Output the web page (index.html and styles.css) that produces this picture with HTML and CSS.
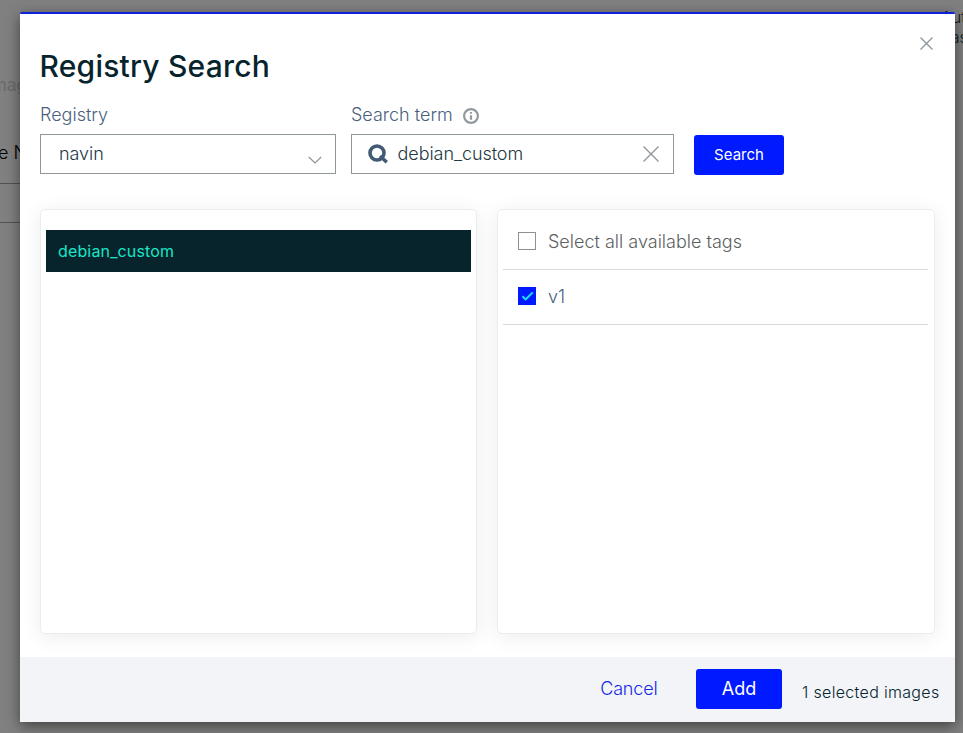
FILE: index.html
```html
<!DOCTYPE html>
<html lang="en">
<head>
<meta charset="utf-8">
<title>Registry Search</title>
<link rel="stylesheet" href="styles.css">
</head>
<body>
<div class="backdrop">
  <span class="behind behind-tab">Imag</span>
  <span class="behind behind-label">e N</span>
  <div class="behind behind-input"></div>
  <span class="behind behind-note">Aut<br>bas</span>
</div>
<section class="modal">
  <button class="close" aria-label="Close">
    <svg width="13" height="13" viewBox="0 0 13 13"><path d="M.5.5l12 12M12.5.5l-12 12"/></svg>
  </button>
  <div class="content">
    <h1>Registry Search</h1>
    <div class="form">
      <div class="field registry">
        <label>Registry</label>
        <div class="control"><span class="value">navin</span>
          <svg class="chevron" width="14" height="8" viewBox="0 0 14 8"><path d="M.8 1L7 7l6.200-6"/></svg>
        </div>
      </div>
      <div class="field term">
        <label>Search term
          <svg class="info" width="16" height="16" viewBox="0 0 16 16"><circle cx="8" cy="8" r="6.900"/><path d="M8 7.200v4.500M8 4v1.800"/></svg>
        </label>
        <div class="control">
          <svg class="glass" width="20" height="20" viewBox="0 0 20 20"><circle cx="9" cy="9" r="7"/><path d="M12 12l6.800 6.300"/></svg>
          <span class="value">debian_custom</span>
          <svg class="clear" width="16" height="16" viewBox="0 0 16 16"><path d="M.5.5l15 15M15.500.5l-15 15"/></svg>
        </div>
      </div>
      <button class="btn search">Search</button>
    </div>
    <div class="panels">
      <div class="panel images"><div class="image"><span>debian_custom</span></div></div>
      <div class="panel tags">
        <div class="tag all"><i class="box"></i><span>Select all available tags</span></div>
        <div class="tag"><i class="box checked"><svg width="18" height="18" viewBox="0 0 18 18"><path d="M4.500 9.200l3.200 3.200 7-7"/></svg></i><span>v1</span></div>
      </div>
    </div>
  </div>
  <footer>
    <button class="cancel">Cancel</button>
    <button class="btn add">Add</button>
    <span class="count">1 selected images</span>
  </footer>
</section>
</body>
</html>
```
FILE: styles.css
```css
* { box-sizing: border-box; }
body {
  margin: 0;
  height: 733px;
  padding: 12px 8px 11px 20px;
  overflow: hidden;
  background: #808080;
  font: 300 18px/22px Inter, "Liberation Sans", sans-serif;
  color: #07242d;
}
button { border: 0; padding: 0; background: none; font: inherit; }
svg { display: block; flex: none; fill: none; }

.backdrop { position: absolute; inset: 0; overflow: hidden; }
.behind { position: absolute; white-space: nowrap; }
.behind-tab { left: -13px; top: 74px; font-size: 17px; font-weight: 500; color: #6c6c6c; }
.behind-label { left: -2px; top: 142px; color: #000; }
.behind-input { left: -10px; top: 183px; width: 500px; height: 40px; border: 1px solid #505252; }
.behind-note { left: 941px; top: 7px; font-size: 16px; line-height: 20px; color: #08191f; }

.modal {
  position: relative;
  display: flex;
  flex-direction: column;
  height: 710px;
  border-top: 2px solid #1022d8;
  border-radius: 2px 2px 0 0;
  background: #fff;
  box-shadow: 0 4px 14px rgba(0, 0, 0, .5);
}
.close { position: absolute; top: 22.500px; right: 22px; }
.close svg, .clear { stroke: #8d9599; stroke-width: 1.3; }
.content { flex: 1; padding: 33px 20px 0; }
h1 { margin: 0 0 0 -.5px; font-size: 30px; line-height: 38px; font-weight: 500; letter-spacing: .22px; }

.form { display: flex; align-items: flex-end; margin-top: 19px; }
.field label { display: flex; height: 22px; margin-bottom: 8px; color: #4a5f7d; }
.registry { width: 296px; margin-right: 15px; }
.term { width: 323px; margin-right: 20px; }
.info { margin: 4px 0 0 10px; stroke: #929a9e; stroke-width: 2.2; }
.control {
  display: flex;
  align-items: center;
  height: 40px;
  border: 1px solid #8f979a;
  color: #23383f;
}
.registry .control { padding: 0 13px 0 18px; }
.term .control { padding: 0 14px 0 16px; }
.value { flex: 1; letter-spacing: -.06px; }
.chevron { margin-top: 11px; stroke: #8d9599; stroke-width: 1.2; }
.glass { margin-right: 9.5px; stroke: #425a74; stroke-width: 3.6; }
.btn { border-radius: 3px; background: #001aff; color: #fff; font-weight: 400; }
.search { width: 90px; height: 40px; margin-bottom: -1px; font-size: 15px; }

.panels { display: flex; gap: 20px; margin-top: 35px; }
.panel {
  flex: 1;
  height: 425px;
  border: 1px solid #ebecef;
  border-radius: 5px;
  box-shadow: 0 3px 20px rgba(0, 0, 0, .08);
}
.images { padding: 20px 5px; }
.image {
  height: 42px;
  padding: 10px 12px;
  background: #07242d;
  color: #19e6c6;
  font-size: 16px;
  font-weight: 400;
  letter-spacing: .15px;
}
.tags { padding: 5px 6px 5px 5px; }
.tag {
  display: flex;
  align-items: center;
  gap: 12px;
  height: 55px;
  padding-left: 15px;
  border-bottom: 1px solid #d8dadb;
  color: #4a5f7d;
}
.all { color: #5c5f61; }
.box { width: 18px; height: 18px; margin-top: -2px; border: 1px solid #909090; }
.checked { border: 0; background: #001aff; }
.checked svg { stroke: #17e5ff; stroke-width: 2; }

footer { display: flex; height: 65px; padding: 12px 15.5px 0 0; justify-content: flex-end; background: #f2f4f8; }
.cancel { height: 40px; margin-right: 38.500px; color: #1529e8; letter-spacing: -.15px; }
.add { width: 86px; height: 40px; margin-right: 20px; }
.count { margin-top: 12px; font-size: 16px; letter-spacing: .32px; }
```
